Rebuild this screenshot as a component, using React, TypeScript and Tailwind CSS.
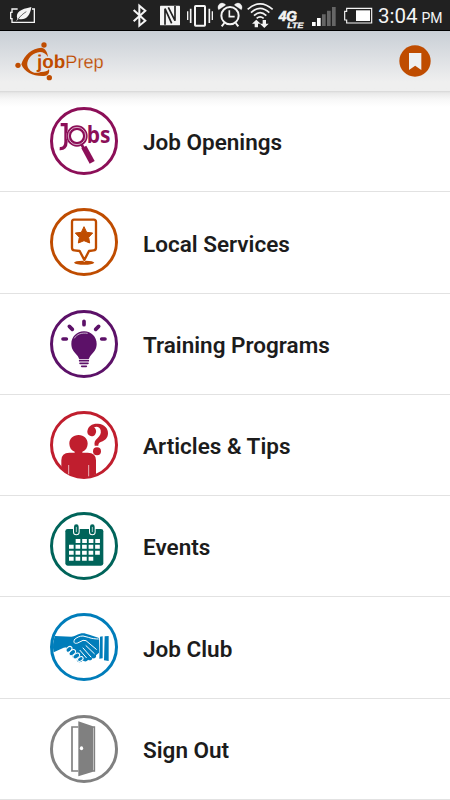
import type { ReactNode } from "react";

type MenuItem = {
  label: string;
  color: string;
  icon: ReactNode;
};

const items: MenuItem[] = [
  {
    label: "Job Openings",
    color: "text-[#8c0f58]",
    icon: (
      <>
        <text
          x="128"
          y="126"
          fontSize="70"
          textLength="71"
          lengthAdjust="spacingAndGlyphs"
          fill="currentColor"
          fontFamily="'Open Sans', sans-serif"
          fontWeight="700"
        >
          bs
        </text>
        <path
          d="M50 71H66V122C66 137 59 144 47 143"
          fill="none"
          stroke="currentColor"
          strokeWidth="10"
        />
        <circle cx="99" cy="105" r="32" fill="#fff" />
        <circle cx="99" cy="105" r="25" fill="none" stroke="currentColor" strokeWidth="14" />
        <circle cx="99" cy="105" r="26" fill="none" stroke="#fff" strokeWidth="2" />
        <path d="M112 129L119 142" stroke="currentColor" strokeWidth="8" />
        <path d="M112 142L127 134L152 180L137 188Z" fill="currentColor" />
      </>
    ),
  },
  {
    label: "Local Services",
    color: "text-[#bf4c00]",
    icon: (
      <>
        <path
          d="M90 53H149Q156 53 156 60V137Q156 144 149 145L135 147L121 174L107 147L91 145Q84 144 84 137V60Q84 53 90 53Z"
          fill="none"
          stroke="currentColor"
          strokeWidth="7"
          strokeLinejoin="round"
        />
        <path
          d="M120 74L128 91L146 93L134 106L137 123L120 116L103 123L106 106L94 93L112 91Z"
          fill="currentColor"
          stroke="currentColor"
          strokeWidth="3"
          strokeLinejoin="round"
        />
        <path d="M90 182Q92 176 117 176L121 180L125 176Q148 176 151 182Q144 188 121 188Q96 188 90 182Z" fill="currentColor" />
      </>
    ),
  },
  {
    label: "Training Programs",
    color: "text-[#5c1168]",
    icon: (
      <>
        <path
          d="M120 52V62M76 67L85 76M164 67L155 76M57 105H67M173 105H183"
          stroke="currentColor"
          strokeWidth="11"
          strokeLinecap="round"
        />
        <path
          d="M120 82C98 82 82 99 82 120C82 138 93 146 101 156C104 160 104 164 106 165H134C136 164 136 160 139 156C147 146 158 138 158 120C158 99 142 82 120 82Z"
          fill="currentColor"
        />
        <path d="M91 103C98 91 112 85 131 88" fill="none" stroke="#fff" strokeWidth="2" />
        <path d="M107 170H133M108 178H132M113 187H127" stroke="currentColor" strokeWidth="5" strokeLinecap="round" />
      </>
    ),
  },
  {
    label: "Articles & Tips",
    color: "text-[#c01e2e]",
    icon: (
      <>
        <path
          d="M52 190V166Q52 143 76 143H92V140C82 136 76 127 76 116C76 101 87 90 104 90C120 90 131 101 131 116C131 127 125 136 115 140V143H131Q156 143 156 166V207Q137 218 120 218Q80 218 52 190Z"
          fill="currentColor"
        />
        <path d="M74 180V208M134 180V214" stroke="#fff" strokeWidth="2" />
        <path
          d="M130 79C132 63 145 55 162 56C181 57 193 70 192 86C191 99 183 106 172 110C164 113 163 116 163 122H152C150 111 153 106 161 99C168 93 172 86 170 76C168 67 160 63 150 67C158 73 158 83 153 89C145 98 129 93 130 79Z"
          fill="currentColor"
        />
        <circle cx="159" cy="139" r="12" fill="currentColor" />
      </>
    ),
  },
  {
    label: "Events",
    color: "text-[#00645a]",
    icon: (
      <>
        <rect x="64" y="69" width="114" height="110" rx="7" fill="currentColor" />
        <path d="M97 62V78M145 62V78" stroke="#fff" strokeWidth="20" strokeLinecap="round" />
        <path d="M97 62V78M145 62V78" stroke="currentColor" strokeWidth="14" strokeLinecap="round" />
        <path d="M97 64V77M145 64V77" stroke="#fff" strokeWidth="2" strokeLinecap="round" />
        <path
          d="M95 105H168M75 122.500H168M75 140.500H168M75 158.500H149"
          stroke="#fff"
          strokeWidth="12"
          strokeDasharray="14 5.600"
        />
      </>
    ),
  },
  {
    label: "Job Club",
    color: "text-[#007dba]",
    icon: (
      <>
        <path
          d="M33 87L82 89C92 88 98 82 108 80C119 77 125 80 136 83L165 93V137L156 145C158 153 151 156 145 153C145 160 137 162 132 158C129 165 120 164 116 160L113 164C104 168 96 163 99 155C91 158 83 152 86 145C78 147 72 141 76 133C67 133 63 127 68 121L59 122L29 136C25 119 27 102 33 87Z"
          fill="currentColor"
        />
        <path
          d="M91 98C98 91 107 87 117 87L133 91C144 95 155 96 163 96M91 99C87 107 92 111 101 108L117 100L126 101L157 127M117 123L141 150M126 116L151 140M108 130L127 152"
          fill="none"
          stroke="#fff"
          strokeWidth="3"
          strokeLinecap="round"
          strokeLinejoin="round"
        />
        <g fill="currentColor" stroke="#fff" strokeWidth="3">
          <ellipse cx="75" cy="127" rx="10" ry="7" transform="rotate(-40 75 127)" />
          <ellipse cx="85" cy="137" rx="11" ry="7" transform="rotate(-40 85 137)" />
          <ellipse cx="97" cy="147" rx="11" ry="7" transform="rotate(-35 97 147)" />
          <ellipse cx="109" cy="156" rx="9" ry="6" transform="rotate(-30 109 156)" />
        </g>
        <path d="M168 89L176 88V154L166 155ZM182 88L194 87V162L180 160Z" fill="currentColor" />
      </>
    ),
  },
  {
    label: "Sign Out",
    color: "text-[#808080]",
    icon: (
      <>
        <path d="M103 54H84V186H103M147 54H151V186H147" fill="none" stroke="currentColor" strokeWidth="5" />
        <path d="M103 37L147 52V188L103 202Z" fill="currentColor" />
        <ellipse cx="112.500" cy="118" rx="5" ry="6" fill="#fff" />
      </>
    ),
  },
];

function StatusBar() {
  // All glyphs share one coordinate space, three units to a pixel.
  return (
    <div className="flex h-[31px] shrink-0 border-b border-black bg-[#212121] text-[#f4f4f4]">
      <svg className="ml-[9px] h-[30px] w-[27px]" viewBox="27 0 81 90" fill="none" stroke="currentColor">
        <path d="M53 27H36V37H32V56H36V67H103V27H96" strokeWidth="4" />
        <path d="M52 57C46 36 61 28 94 21C91 47 77 62 56 57L48 64Z" fill="currentColor" stroke="none" />
        <path d="M54 58C61 48 69 41 79 35" stroke="#212121" strokeWidth="2" />
      </svg>
      <svg className="ml-24 h-[30px] w-4" viewBox="396 0 48 90" fill="none" stroke="currentColor" strokeWidth="6">
        <path d="M401 30L436 62L418 77V17L436 32L401 64" />
      </svg>
      <svg className="ml-[11px] h-[30px] w-[22px]" viewBox="477 0 66 90" fill="none">
        <rect x="480" y="17" width="60" height="59" rx="2" fill="currentColor" />
        <path d="M495 74V26L515 70M505 22L525 62V18" stroke="#212121" strokeWidth="5" />
      </svg>
      <svg className="ml-[5px] h-[30px] w-7" viewBox="558 0 84 90" fill="none" stroke="currentColor">
        <rect x="585" y="18" width="30" height="59" rx="2" strokeWidth="6" />
        <path d="M563 34V60M637 34V60" strokeWidth="4" />
        <path d="M572 26V69M628 26V69" strokeWidth="5" />
      </svg>
      <svg className="ml-[3px] h-[30px] w-[26px]" viewBox="651 0 78 90" fill="none" stroke="currentColor">
        <circle cx="690" cy="47" r="26" strokeWidth="6" />
        <path d="M688 31V50H704" strokeWidth="5" />
        <path d="M673 69L665 79M707 69L715 79" strokeWidth="6" />
        <path d="M656 29A12 12 0 0 1 677 15ZM703 15A12 12 0 0 1 724 29Z" fill="currentColor" strokeWidth="1" />
      </svg>
      <svg className="ml-1 h-[30px] w-[27px]" viewBox="741 0 81 90" fill="none" stroke="currentColor" strokeWidth="5">
        <path d="M743 28Q780 -5 818 28M753 38Q780 12 808 38M762 47Q780 29 799 47M770 55Q780 46 791 55" />
        <path
          d="M769 59L756 71H764V82H774V71H782ZM793 84L780 71H788V60H798V71H806Z"
          fill="currentColor"
          stroke="none"
        />
      </svg>
      <svg className="ml-1 h-[30px] w-[27px]" viewBox="834 0 81 90" fill="currentColor">
        <g fontFamily="'Liberation Sans', sans-serif" fontWeight="bold" fontStyle="italic" textRendering="geometricPrecision">
          <text
            x="836"
            y="64"
            fontSize="43"
            stroke="currentColor"
            strokeWidth="2"
            textLength="55"
            lengthAdjust="spacingAndGlyphs"
          >
            4G
          </text>
          <text
            x="862"
            y="84"
            fontSize="23"
            stroke="currentColor"
            strokeWidth="1"
            textLength="48"
            lengthAdjust="spacingAndGlyphs"
          >
            LTE
          </text>
        </g>
      </svg>
      <svg className="ml-[6px] h-[30px] w-[25px]" viewBox="933 0 75 90">
        <path d="M936 66H947V78H936ZM951 54H962V78H951Z" fill="#fff" />
        <path d="M966 43H977V78H966ZM981 32H992V78H981ZM996 21H1007V78H996Z" fill="#666" />
      </svg>
      <svg className="ml-2 h-[30px] w-[29px]" viewBox="1032 0 87 90" fill="none" stroke="currentColor" strokeWidth="3.500">
        <path d="M1040 25H1115V69H1040V60H1034V34H1040Z" />
        <rect x="1068" y="31" width="42" height="32" fill="#fff" stroke="none" />
      </svg>
      <div className="ml-[5px] flex items-baseline font-[Roboto,sans-serif] whitespace-nowrap">
        <span className="text-[20.5px] leading-[33px]">3:04</span>
        <span className="ml-1 text-[14px]">PM</span>
      </div>
    </div>
  );
}

function Logo() {
  return (
    <svg className="h-10 w-[90px] text-[#bf4c00]" viewBox="45 123 270 120" fill="currentColor">
      <circle cx="54" cy="196" r="8" />
      <circle cx="132" cy="135" r="8" />
      <circle cx="148" cy="233" r="8" />
      <path d="M64 193C72 165 96 144 125 143C136 145 143 157 144 171C138 161 129 156 120 156C99 158 86 171 82 188C80 201 88 211 99 217C107 220 114 218 123 216C135 216 143 214 147 207C150 219 143 229 130 228C99 229 73 217 64 193Z" />
      <g fontFamily="'Liberation Sans', sans-serif" textRendering="geometricPrecision">
        <text
          x="111"
          y="205"
          fontSize="56"
          fontWeight="bold"
          textLength="85"
          lengthAdjust="spacingAndGlyphs"
          stroke="#e4e7e9"
          strokeWidth="3"
          paintOrder="stroke"
        >
          job
        </text>
        <text
          x="196"
          y="205"
          fontSize="55"
          textLength="115"
          lengthAdjust="spacingAndGlyphs"
          stroke="#e4e7e9"
          strokeWidth="0.600"
        >
          Prep
        </text>
      </g>
    </svg>
  );
}

function Header() {
  return (
    <header className="flex h-[60px] shrink-0 items-center justify-between bg-linear-to-b from-[#c9cfd6] to-[#efefef] to-85% pr-[19px] pl-[15px]">
      <Logo />
      <button className="size-8" aria-label="Bookmarks">
        <svg className="size-8" viewBox="0 0 96 96">
          <circle cx="48" cy="48" r="47" fill="#bf4c00" />
          <path d="M30 24H67V75L48.500 62L30 75Z" fill="#eef0f2" />
        </svg>
      </button>
    </header>
  );
}

export default function App() {
  return (
    <div className="flex h-[800px] w-[450px] flex-col overflow-hidden bg-white">
      <StatusBar />
      <Header />
      <ul className="bg-[linear-gradient(#d6d6d6,#e9e9e9_2px,#f7f7f7_8px,#fff_16px)]">
        {items.map(({ label, color, icon }) => (
          <li key={label} className="flex h-[101.25px] items-center border-b border-[#e2e2e2] pl-11">
            <svg className={`size-20 shrink-0 ${color}`} viewBox="0 0 240 240">
              <circle cx="120" cy="120" r="97.500" fill="#fff" stroke="currentColor" strokeWidth="9" />
              {icon}
            </svg>
            <span className="ml-[19px] pt-1 font-[Roboto,sans-serif] text-[22.5px] font-semibold whitespace-nowrap text-[#1c1c1c]">
              {label}
            </span>
          </li>
        ))}
      </ul>
    </div>
  );
}
